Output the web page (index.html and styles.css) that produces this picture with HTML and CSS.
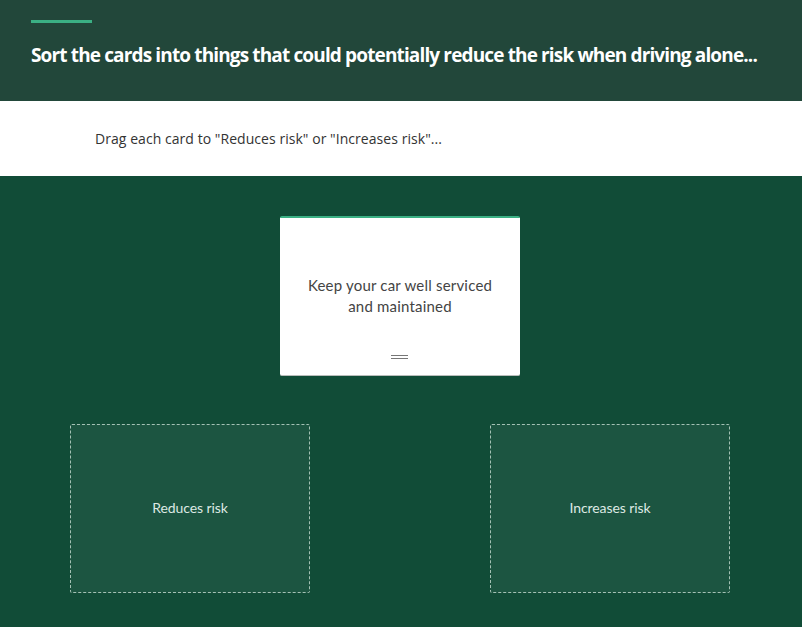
FILE: index.html
```html
<!DOCTYPE html>
<html lang="en">
<head>
<meta charset="utf-8">
<title>Sort the cards</title>
<link rel="stylesheet" href="styles.css">
</head>
<body>
<header class="header">
  <div class="accent"></div>
  <h1 class="title">Sort the cards into things that could potentially reduce the risk when driving alone...</h1>
</header>
<section class="instructions">
  <p class="instr-text">Drag each card to "Reduces risk" or "Increases risk"...</p>
</section>
<main class="board">
  <div class="deck">
    <div class="card">
      <p class="card-text">Keep your car well serviced<br>and maintained</p>
      <div class="handle"><span></span><span></span></div>
    </div>
  </div>
  <div class="zones">
    <div class="zone"><span class="zone-label">Reduces risk</span></div>
    <div class="zone"><span class="zone-label">Increases risk</span></div>
  </div>
</main>
</body>
</html>
```

FILE: styles.css
```css
* { box-sizing: border-box; }
html, body { margin: 0; padding: 0; }
body {
  width: 802px;
  height: 627px;
  overflow: hidden;
  background: #114c37;
  font-family: "Open Sans", "Noto Sans", sans-serif;
}
.header {
  background: #22473a;
  height: 101px;
  padding: 20px 31px 0;
}
.accent {
  width: 61px;
  height: 3px;
  background: #3bb084;
}
.title {
  margin: 18px 0 0;
  color: #ffffff;
  font-family: "Open Sans", sans-serif;
  font-weight: 700;
  font-size: 19px;
  line-height: 28px;
  letter-spacing: -0.86px;
  white-space: nowrap;
}
.instructions {
  background: #ffffff;
  height: 75px;
  display: flex;
  align-items: center;
  padding-left: 95px;
}
.instr-text {
  margin: 0 0 1px;
  color: #333;
  font-family: "Open Sans", sans-serif;
  font-size: 14px;
  letter-spacing: 0.05px;
}
.board {
  padding-top: 40px;
}
.deck {
  display: flex;
  justify-content: center;
}
.card {
  width: 240px;
  height: 160px;
  margin-left: -2px;
  background: #ffffff;
  border-top: 2px solid #3bb084;
  border-bottom: 1px solid #b9bdbb;
  border-radius: 2px;
  display: flex;
  flex-direction: column;
  align-items: center;
}
.card-text {
  margin: 57px 0 0;
  color: #444;
  font-family: "Lato", sans-serif;
  font-size: 15px;
  line-height: 21px;
  letter-spacing: 0.2px;
  text-align: center;
}
.handle {
  margin-top: 38px;
  width: 17px;
  margin-left: -1px;
  display: flex;
  flex-direction: column;
  gap: 2px;
}
.handle span {
  display: block;
  height: 1px;
  background: #777;
}
.zones {
  margin-top: 48px;
  display: flex;
  justify-content: space-between;
  padding: 0 72px 0 70px;
}
.zone {
  width: 240px;
  height: 169px;
  background: #1c5541;
  border: 1px dashed #a4c1b4;
  border-radius: 2px;
  display: flex;
  align-items: center;
  justify-content: center;
}
.zone-label {
  color: #dce9e3;
  font-family: "Lato", sans-serif;
  font-size: 14px;
  letter-spacing: -0.1px;
  margin-top: -2px;
}
```
